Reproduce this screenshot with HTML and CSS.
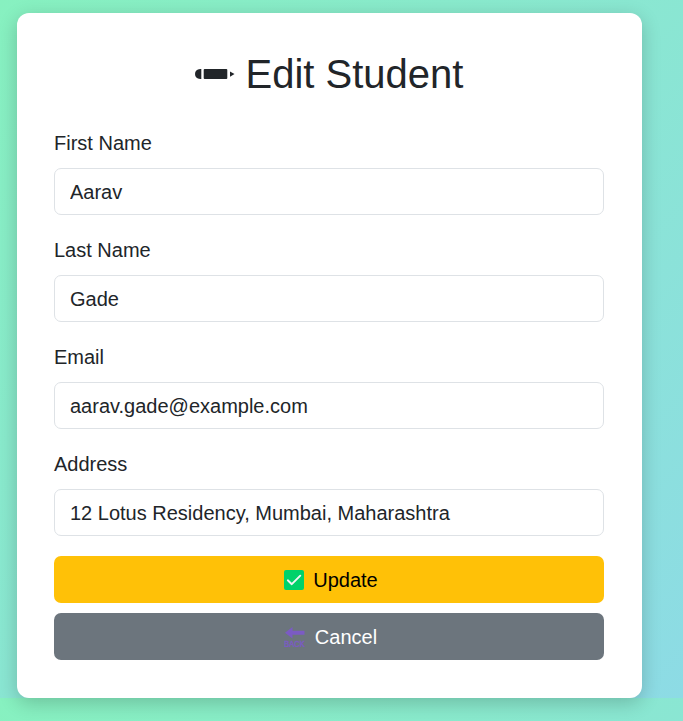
FILE: index.html
```html
<!DOCTYPE html>
<html lang="en">
<head>
<meta charset="utf-8">
<title>Edit Student</title>
<link rel="stylesheet" href="styles.css">
</head>
<body>
<main class="card">
  <h1 class="title">
    <svg class="pencil" viewBox="0 0 40 14" aria-hidden="true"><path d="M6.3 2v10H5.2Q0 11.400 0 7T5.200 2Z"/><rect x="8.700" y="2" width="23.600" height="10" rx="1"/><path d="M35 4.500 39.500 7 35 9.800Z"/></svg>
    <span>Edit Student</span>
  </h1>
  <form class="form">
    <label class="label" for="first">First Name</label>
    <input class="input" id="first" type="text" value="Aarav">
    <label class="label" for="last">Last Name</label>
    <input class="input" id="last" type="text" value="Gade">
    <label class="label" for="email">Email</label>
    <input class="input" id="email" type="email" value="aarav.gade@example.com">
    <label class="label" for="address">Address</label>
    <input class="input" id="address" type="text" value="12 Lotus Residency, Mumbai, Maharashtra">
    <button class="btn update" type="button">
      <svg class="check" viewBox="0 0 20 20" aria-hidden="true"><rect width="20" height="20" rx="2" fill="#00d26a"/><path d="M3.800 10.300 7.800 14.200 16.300 5.700" fill="none" stroke="#f4f4f4" stroke-width="1.900" stroke-linecap="round" stroke-linejoin="round"/></svg>
      <span>Update</span>
    </button>
    <button class="btn cancel" type="button">
      <svg class="back" viewBox="0 0 22 20" aria-hidden="true"><path d="M1 5.800 8.500 0V3.800H20.500V7.800H8.500V11.600Z"/><text x="0.300" y="19.500" textLength="20.400" lengthAdjust="spacingAndGlyphs">BACK</text></svg>
      <span>Cancel</span>
    </button>
  </form>
</main>
</body>
</html>
```
FILE: styles.css
```css
* { box-sizing: border-box; }

html {
  min-height: 100%;
  background: linear-gradient(135deg, #87f1c0, #8ddbe5) 0 0 / 100% 698px repeat-y;
}

body {
  margin: 0;
  padding: 13px 41px 23px 17px;
  font: 20px/30px "Liberation Sans", Arial, sans-serif;
  color: #212529;
}

.card {
  height: 685px;
  padding: 37px 38px 38px 37px;
  border-radius: 12px;
  background: #fff;
  box-shadow: 0 5px 19px rgba(0, 0, 0, .2);
}

.title {
  display: flex;
  justify-content: center;
  align-items: center;
  gap: 11px;
  height: 48px;
  margin: 0 0 30px;
  font-size: 40px;
  font-weight: 400;
  line-height: 48px;
}

.pencil { width: 40px; height: 14px; fill: #212529; }

.form { display: flex; flex-direction: column; }

.label { margin-bottom: 10px; }

.input {
  height: 47px;
  margin: 0 0 20px;
  padding: 8px 15px 6px;
  border: 1px solid #dee2e6;
  border-radius: 7px;
  background: #fff;
  color: inherit;
  font: inherit;
}

.btn {
  display: flex;
  justify-content: center;
  align-items: center;
  height: 47px;
  padding: 0 0 0 4px;
  border: 0;
  border-radius: 7px;
  font: inherit;
}

.update { gap: 9px; margin-bottom: 10px; background: #ffc107; color: #000; }
.cancel { gap: 9px; padding-left: 3px; background: #6c757d; color: #fff; }
.check { width: 20px; height: 20px; }
.back { width: 22px; height: 20px; fill: #7b5bc4; }
.back text { font: 8.500px "Liberation Sans", Arial, sans-serif; stroke: #7b5bc4; stroke-width: .4px; }
```
